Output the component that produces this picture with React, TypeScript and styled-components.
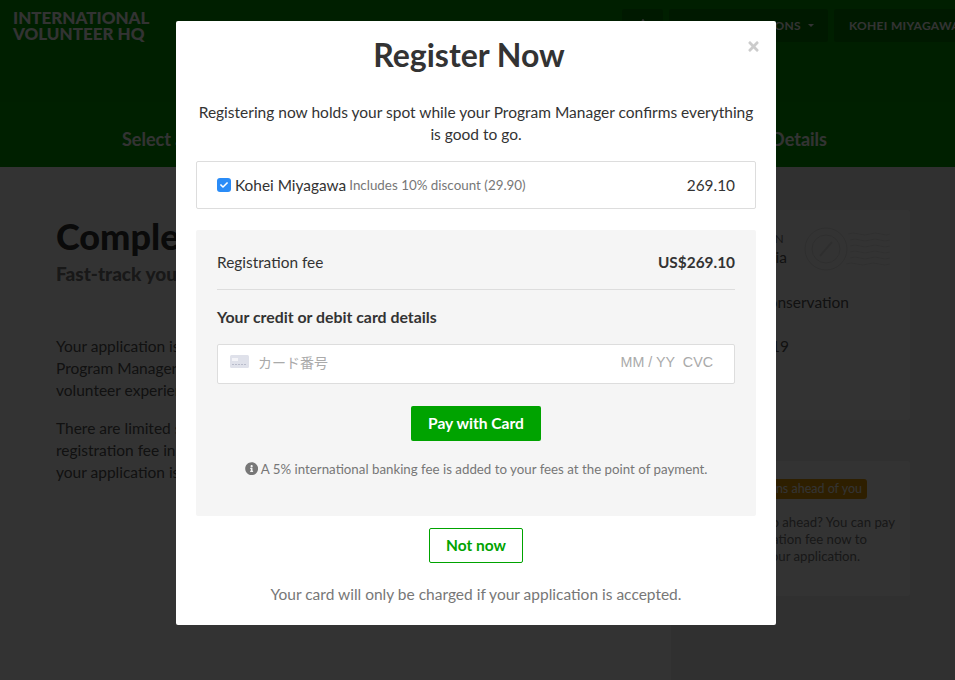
import React from "react";
import styled, { createGlobalStyle } from "styled-components";
import { FaInfoCircle, FaTimes, FaCheck, FaBell } from "react-icons/fa";

const Global = createGlobalStyle`
  html, body { margin: 0; padding: 0; height: 100%; overflow: hidden; background: #fff; }
  body { font-family: Lato, "Noto Sans", sans-serif; color: #333; }
  * { box-sizing: border-box; }
`;

const Page = styled.div`
  width: 955px;
  height: 680px;
  overflow: hidden;
  background: #fff;
`;
const Header = styled.header`
  height: 167px;
  background: #00a000;
  color: #fff;
`;
const TopBar = styled.div`
  height: 102px;
  display: flex;
  justify-content: space-between;
  align-items: flex-start;
  padding: 9px 0 0 13px;
  background: #009a00;
`;
const Logo = styled.div`
  margin-top: 1px;
  font-weight: 900;
  font-size: 17px;
  line-height: 16px;
  color: #fff;
  text-transform: uppercase;
`;
const Nav = styled.nav`
  display: flex;
  gap: 6px;
  width: 333px;
  flex: none;
  overflow: hidden;
`;
const NavButton = styled.div<{ $w: number }>`
  width: ${(p) => p.$w}px;
  flex: none;
  height: 33px;
  background: #007c00;
  border-radius: 2px;
  font-size: 12px;
  font-weight: 700;
  letter-spacing: 0.3px;
  text-transform: uppercase;
  white-space: nowrap;
  display: flex;
  align-items: center;
  justify-content: flex-end;
  padding-right: 14px;
`;
const IconButton = styled(NavButton)`
  justify-content: center;
  padding: 0;
  font-size: 14px;
`;
const UserButton = styled(NavButton)`
  justify-content: flex-start;
  padding: 0 0 0 15px;
`;
const Caret = styled.span`
  display: inline-block;
  margin-left: 7px;
  border: 3px solid transparent;
  border-top-color: #fff;
  border-bottom: 0;
`;
const Steps = styled.div`
  height: 65px;
  display: flex;
  justify-content: space-between;
  padding: 26px 128px 0 122px;
  font-size: 18px;
  font-weight: 700;
  line-height: 22px;
  color: #fff;
`;
const Main = styled.main`
  display: grid;
  grid-template-columns: 671px 284px;
  height: 513px;
`;
const Lead = styled.div`
  padding: 43px 0 0 56px;
`;
const Title = styled.h1`
  margin: 0;
  font-size: 36px;
  line-height: 52px;
  font-weight: 900;
  color: #333;
  white-space: nowrap;
`;
const Subtitle = styled.h2`
  margin: 1px 0 50px;
  font-size: 19px;
  line-height: 22px;
  font-weight: 900;
  color: #777;
  white-space: nowrap;
`;
const BodyText = styled.p`
  margin: 0 0 16px;
  width: 560px;
  font-size: 15.5px;
  line-height: 22px;
  color: #555;
`;
const Side = styled.aside`
  display: flex;
  flex-direction: column;
  gap: 41px;
  padding: 43px 45px 0 19px;
  background: #f0f0f0;
`;
const Card = styled.section`
  background: #fff;
  border-radius: 3px;
`;
const TripCard = styled(Card)`
  height: 210px;
  position: relative;
  padding-top: 22px;
  color: #555;
`;
const Stamp = styled.svg`
  position: absolute;
  left: 114px;
  top: 16px;
  width: 90px;
  height: 46px;
`;
const TripLine = styled.div<{ $gap?: number; $size?: number; $w: number }>`
  width: ${(p) => p.$w}px;
  font-size: ${(p) => p.$size ?? 15.5}px;
  line-height: 22px;
  margin-bottom: ${(p) => p.$gap ?? 0}px;
  text-align: right;
  white-space: nowrap;
`;
const LabelLine = styled(TripLine)`
  line-height: 13px;
  letter-spacing: 0.3px;
  color: #777;
`;
const QueueCard = styled(Card)`
  height: 135px;
  padding-top: 18px;
`;
const Badge = styled.div`
  width: 177px;
  height: 20px;
  background: #e59a00;
  border-radius: 3px;
  color: #fff;
  font-size: 12.5px;
  line-height: 20px;
  text-align: right;
  padding-right: 5px;
  white-space: nowrap;
  overflow: hidden;
`;
const QueueText = styled.p`
  margin: 15px 0 0;
  font-size: 13.2px;
  line-height: 17px;
  color: #777;
  text-align: right;
`;
const QueueLine = styled.span<{ $pad: number }>`
  display: block;
  white-space: nowrap;
  padding-right: ${(p) => p.$pad}px;
`;

const Overlay = styled.div`
  position: fixed;
  inset: 0;
  background: rgba(0, 0, 0, 0.8);
  display: flex;
  justify-content: center;
  align-items: flex-start;
  padding: 21px 3px 0 0;
`;
const Modal = styled.div`
  position: relative;
  width: 600px;
  height: 604px;
  background: #fff;
  border-radius: 2px;
  padding: 12px 20px 0;
`;
const Close = styled.button`
  position: absolute;
  top: 18px;
  right: 15px;
  border: 0;
  padding: 0;
  background: none;
  color: #ccc;
  font-size: 15px;
  line-height: 15px;
  display: flex;
`;
const ModalTitle = styled.h2`
  margin: 0;
  padding-right: 14px;
  font-size: 32px;
  line-height: 44px;
  font-weight: 700;
  text-align: center;
  color: #333;
`;
const Intro = styled.p`
  margin: 24px 0 16px;
  font-size: 15.5px;
  line-height: 22px;
  text-align: center;
  color: #333;
`;
const PersonRow = styled.label`
  height: 48px;
  border: 1px solid #ddd;
  border-radius: 2px;
  display: flex;
  align-items: center;
  justify-content: space-between;
  padding: 0 20px;
  font-size: 15.4px;
`;
const PersonName = styled.span`
  display: flex;
  align-items: center;
`;
const Checkbox = styled.span`
  width: 14px;
  height: 14px;
  margin-right: 4px;
  border-radius: 3px;
  background: #2a8cf7;
  color: #fff;
  font-size: 8px;
  display: flex;
  align-items: center;
  justify-content: center;
`;
const Discount = styled.small`
  margin-left: 3px;
  font-size: 13.4px;
  color: #777;
`;
const PayPanel = styled.section`
  margin-top: 21px;
  height: 286px;
  background: #f5f5f5;
  border-radius: 2px;
  padding: 21px 21px 0;
`;
const FeeRow = styled.div`
  display: flex;
  justify-content: space-between;
  font-size: 15.4px;
  line-height: 22px;
  padding-bottom: 16px;
  border-bottom: 1px solid #ddd;
`;
const FeeAmount = styled.strong`
  font-weight: 700;
`;
const CardHeading = styled.h3`
  margin: 16px 0 16px;
  font-size: 15.85px;
  line-height: 22px;
  font-weight: 700;
`;
const CardInput = styled.div`
  height: 40px;
  background: #fff;
  border: 1px solid #ddd;
  border-radius: 2px;
  display: flex;
  align-items: center;
  padding: 0 21px 5px 12px;
  font-family: "Liberation Sans", "Noto Sans CJK JP", sans-serif;
  font-size: 14px;
  color: #aaa;
`;
const CardIcon = styled.svg`
  width: 19px;
  height: 13px;
  margin-right: 9px;
  flex: none;
`;
const CardNumber = styled.span`
  flex: 1;
`;
const CardMeta = styled.span`
  font-size: 14.3px;
  white-space: pre;
`;
const CenterRow = styled.div`
  display: flex;
  justify-content: center;
`;
const PayButton = styled.button`
  margin-top: 22px;
  width: 130px;
  height: 35px;
  border: 0;
  border-radius: 2px;
  background: #00a300;
  color: #fff;
  font: 700 15.6px/35px Lato, sans-serif;
  padding: 0;
`;
const Note = styled.p`
  margin: 19px 0 0;
  display: flex;
  justify-content: center;
  align-items: center;
  gap: 3px;
  font-size: 13.3px;
  line-height: 18px;
  color: #777;
`;
const NotNow = styled.button`
  margin-top: 12px;
  width: 94px;
  height: 35px;
  border: 1px solid #00a300;
  border-radius: 2px;
  background: #fff;
  color: #00a300;
  font: 700 15.5px/33px Lato, sans-serif;
  padding: 0;
`;
const Footnote = styled.p`
  margin: 20px 0 0;
  font-size: 15.5px;
  line-height: 22px;
  text-align: center;
  color: #777;
`;

export default function App() {
  return (
    <Page>
      <Global />
      <Header>
        <TopBar>
          <Logo>
            International
            <br />
            Volunteer HQ
          </Logo>
          <Nav>
            <IconButton $w={41}>
              <FaBell />
            </IconButton>
            <NavButton $w={159}>
              Applications
              <Caret />
            </NavButton>
            <UserButton $w={130}>Kohei Miyagawa</UserButton>
          </Nav>
        </TopBar>
        <Steps>
          <span>Select a Program</span>
          <span>Your Details</span>
        </Steps>
      </Header>
      <Main>
        <Lead>
          <Title>Complete your registration</Title>
          <Subtitle>Fast-track your application</Subtitle>
          <BodyText>
            Your application is being reviewed by your
            <br />
            Program Manager, who will help plan your
            <br />
            volunteer experience.
          </BodyText>
          <BodyText>
            There are limited spots, so paying your
            <br />
            registration fee in advance helps you when
            <br />
            your application is reviewed.
          </BodyText>
        </Lead>
        <Side>
          <TripCard>
            <LabelLine $w={94} $size={12} $gap={1}>DESTINATION</LabelLine>
            <TripLine $w={97} $gap={23}>Indonesia</TripLine>
            <TripLine $w={159} $gap={22}>Wildlife Conservation</TripLine>
            <TripLine $w={99}>Jan 2019</TripLine>
            <Stamp viewBox="0 0 90 46" fill="none" stroke="#e6e6e6" aria-hidden="true">
              <circle cx="22" cy="23" r="21" strokeWidth="1" />
              <circle cx="22" cy="23" r="14" strokeWidth="1" />
              <path d="M16 30 L28 16" strokeWidth="2" />
              <path d="M44 8 q5 -2 11 0 t11 0 t11 0 t9 0 M46 14 q5 -2 10 0 t10 0 t10 0 t10 0 M46 20 q5 -2 10 0 t10 0 t10 0 t10 0 M46 26 q5 -2 10 0 t10 0 t10 0 t10 0 M46 32 q5 -2 10 0 t10 0 t10 0 t10 0 M42 38 q5 -2 11 0 t11 0 t11 0 t11 0" strokeWidth="0.8" />
            </Stamp>
          </TripCard>
          <QueueCard>
            <Badge>3 applications ahead of you</Badge>
            <QueueText>
              <QueueLine $pad={15}>Want to go ahead? You can pay</QueueLine>
              <QueueLine $pad={43}>the registration fee now to</QueueLine>
              <QueueLine $pad={50}>fast-track your application.</QueueLine>
            </QueueText>
          </QueueCard>
        </Side>
      </Main>
      <Overlay>
        <Modal>
          <Close aria-label="Close">
            <FaTimes />
          </Close>
          <ModalTitle>Register Now</ModalTitle>
          <Intro>
            Registering now holds your spot while your Program Manager confirms everything is good to go.
          </Intro>
          <PersonRow>
            <PersonName>
              <Checkbox>
                <FaCheck />
              </Checkbox>
              Kohei Miyagawa
              <Discount>Includes 10% discount (29.90)</Discount>
            </PersonName>
            <span>269.10</span>
          </PersonRow>
          <PayPanel>
            <FeeRow>
              <span>Registration fee</span>
              <FeeAmount>US$269.10</FeeAmount>
            </FeeRow>
            <CardHeading>Your credit or debit card details</CardHeading>
            <CardInput>
              <CardIcon viewBox="0 0 19 13" aria-hidden="true">
                <rect width="19" height="13" rx="1.5" fill="#dfe1ea" />
                <rect x="2" y="3" width="6" height="3" fill="#f4f4f8" />
                <path d="M2 9.5h15" stroke="#b9bccb" strokeWidth="1" strokeDasharray="2 1" />
              </CardIcon>
              <CardNumber>カード番号</CardNumber>
              <CardMeta>MM / YY  CVC</CardMeta>
            </CardInput>
            <CenterRow>
              <PayButton>Pay with Card</PayButton>
            </CenterRow>
            <Note>
              <FaInfoCircle />A 5% international banking fee is added to your fees at the point of payment.
            </Note>
          </PayPanel>
          <CenterRow>
            <NotNow>Not now</NotNow>
          </CenterRow>
          <Footnote>Your card will only be charged if your application is accepted.</Footnote>
        </Modal>
      </Overlay>
    </Page>
  );
}
